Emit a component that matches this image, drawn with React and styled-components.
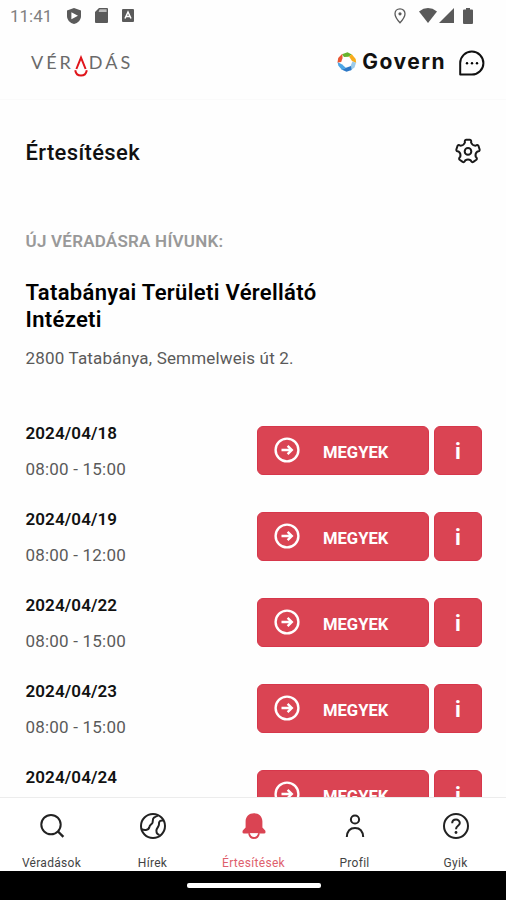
import React from "react";
import styled, { createGlobalStyle, ThemeProvider } from "styled-components";

const theme = {
  colors: {
    red: "#da4453",
    redEdge: "#d6374b",
    dark: "#111111",
    text: "#5a5a5a",
    muted: "#999999",
    status: "#5a5a5a",
    line: "#ececec",
  },
};

const days = [
  { date: "2024/04/18", hours: "08:00 - 15:00" },
  { date: "2024/04/19", hours: "08:00 - 12:00" },
  { date: "2024/04/22", hours: "08:00 - 15:00" },
  { date: "2024/04/23", hours: "08:00 - 15:00" },
  { date: "2024/04/24", hours: "08:00 - 15:00" },
];

const tabs = [
  { label: "Véradások", icon: SearchIcon },
  { label: "Hírek", icon: GlobeIcon },
  { label: "Értesítések", icon: BellIcon, active: true },
  { label: "Profil", icon: ProfileIcon },
  { label: "Gyik", icon: HelpIcon },
];

// five rounded teeth, the first one pointing up
const polar = (r, deg) => {
  const a = (deg * Math.PI) / 180;
  return `${(13 + r * Math.cos(a)).toFixed(2)} ${(13.4 + r * Math.sin(a)).toFixed(2)}`;
};
const gearPath =
  [0, 1, 2, 3, 4]
    .map((k) => {
      const mid = -90 + k * 72;
      return `${k ? "L" : "M"}${polar(9.4, mid - 19)}Q${polar(12, mid - 18)} ${polar(11.8, mid - 9)}L${polar(
        11.8,
        mid + 9
      )}Q${polar(12, mid + 18)} ${polar(9.4, mid + 19)}Q${polar(7.2, mid + 36)} ${polar(9.4, mid + 53)}`;
    })
    .join("") + "Z";

export default function App() {
  return (
    <ThemeProvider theme={theme}>
      <GlobalStyle />
      <Screen>
        <StatusBar />
        <Header />
        <Content>
          <TitleRow>
            <Title>Értesítések</Title>
            <GearIcon />
          </TitleRow>
          <SectionLabel>ÚJ VÉRADÁSRA HÍVUNK:</SectionLabel>
          <Place>Tatabányai Területi Vérellátó Intézeti</Place>
          <Address>2800 Tatabánya, Semmelweis út 2.</Address>
          <DayList>
            {days.map((day) => (
              <Day key={day.date} {...day} />
            ))}
          </DayList>
        </Content>
        <TabBar>
          {tabs.map(({ label, icon: Icon, active }) => (
            <Tab key={label} $active={active}>
              <Icon />
              <TabLabel>{label}</TabLabel>
            </Tab>
          ))}
        </TabBar>
        <SystemBar>
          <HomeHandle />
        </SystemBar>
      </Screen>
    </ThemeProvider>
  );
}

function StatusBar() {
  return (
    <StatusWrapper>
      <Clock>11:41</Clock>
      <StatusLeft>
        <svg width="14" height="16" viewBox="0 0 14 16">
          <path d="M7 0L14 2.5V8C14 12 11 15 7 16C3 15 0 12 0 8V2.5Z" fill="currentColor" />
          <path d="M4.4 4.3L11 7.8L4.4 11.3Z" fill="#fff" />
        </svg>
        <svg width="13" height="15" viewBox="0 0 13 15">
          <path d="M4 0H12Q13 0 13 1V14Q13 15 12 15H1Q0 15 0 14V4Z" fill="currentColor" />
          <path d="M4.6 1.2H11.6V4H3.6Z" fill="#bbb" />
        </svg>
        <svg width="12" height="13" viewBox="0 0 12 13">
          <rect width="12" height="13" rx="1" fill="currentColor" />
          <path d="M3 9.5L6 3L9 9.5M4 7.6H8" fill="none" stroke="#fff" strokeWidth="1.5" />
        </svg>
      </StatusLeft>
      <StatusRight>
        <PinIcon width="12" height="16" viewBox="0 0 12 16">
          <path
            d="M6 .8C3 .8 1 3 1 5.8C1 9.4 6 14.8 6 14.8S11 9.4 11 5.8C11 3 9 .8 6 .8Z"
            fill="none"
            stroke="currentColor"
            strokeWidth="1.3"
          />
          <circle cx="6" cy="5.8" r="1.6" fill="currentColor" />
        </PinIcon>
        <svg width="18" height="15" viewBox="0 0 18 15">
          <path d="M0 3.4Q9 -3.4 18 3.4L9 15Z" fill="currentColor" />
        </svg>
        <SignalIcon width="15" height="15" viewBox="0 0 15 15">
          <path d="M15 0V15H0Z" fill="currentColor" />
        </SignalIcon>
        <svg width="10" height="16" viewBox="0 0 10 16">
          <path d="M3 0H7V1.5H9Q10 1.5 10 2.5V15Q10 16 9 16H1Q0 16 0 15V2.5Q0 1.5 1 1.5H3Z" fill="currentColor" />
        </svg>
      </StatusRight>
    </StatusWrapper>
  );
}

function Header() {
  return (
    <HeaderWrapper>
      <Brand>
        <span>VÉR</span>
        <Drop width="14" height="22" viewBox="0 0 14 22">
          <path d="M2.4 14L7 2.6L11.6 14" fill="none" stroke="#e0151b" strokeWidth="2" />
          <path d="M1.2 15.2Q2.2 20.6 7 20.6T12.8 15.2" fill="none" stroke="#e0151b" strokeWidth="2" />
        </Drop>
        <span>DÁS</span>
      </Brand>
      <Partner>
        <svg width="20" height="20" viewBox="0 0 20 20">
          <path d="M5 2.2L10.5 .3L14.8 2.5L11.5 4.8L7 5Z" fill="#67b32e" />
          <path d="M14.8 2.2L18.7 7L19.2 11L15 8.9L12 4.6Z" fill="#f8ac1b" />
          <path d="M19 10.8L17.5 15.5L13.2 18.8L13.4 14.4L15.4 9.5Z" fill="#9ccbea" />
          <path d="M14.6 18L9.5 19.8L4.5 17.5L8.3 15.9L14 14Z" fill="#2d78c6" />
          <path d="M5 17.9L1.4 13.8L.5 10L5.2 12.4L9 16Z" fill="#4aa5e5" />
          <path d="M.5 10.4L1.2 6L5.3 1.7L5.6 6L4.2 10Z" fill="#e95632" />
        </svg>
        <PartnerName>Govern</PartnerName>
        <ChatIcon width="28" height="26" viewBox="0 0 28 26">
          <path
            d="M2.2 24.6V13A11.6 11.5 0 1 1 13.8 24.6Z"
            fill="none"
            stroke="#111"
            strokeWidth="2"
            strokeLinejoin="round"
          />
          <circle cx="9" cy="13.2" r="1.2" />
          <circle cx="14" cy="13.2" r="1.2" />
          <circle cx="19" cy="13.2" r="1.2" />
        </ChatIcon>
      </Partner>
    </HeaderWrapper>
  );
}

function Day({ date, hours }) {
  return (
    <DayRow>
      <div>
        <DayDate>{date}</DayDate>
        <DayHours>{hours}</DayHours>
      </div>
      <Actions>
        <GoButton>
          <GoIcon viewBox="0 0 26 26">
            <circle cx="13" cy="13" r="11.4" />
            <path d="M7.5 13H18M13.6 8.9L17.8 13L13.6 17.1" />
          </GoIcon>
          <GoText>MEGYEK</GoText>
        </GoButton>
        <InfoButton>i</InfoButton>
      </Actions>
    </DayRow>
  );
}

function GearIcon() {
  return (
    <GearSvg viewBox="0 0 26 26">
      <path d={gearPath} strokeLinejoin="round" />
      <circle cx="13" cy="13.4" r="3.3" />
    </GearSvg>
  );
}

function SearchIcon() {
  return (
    <TabSvg viewBox="0 0 28 28">
      <circle cx="13" cy="12.6" r="9.7" />
      <path d="M20 19.5L25.4 24.8" strokeWidth="2.4" />
    </TabSvg>
  );
}

function GlobeIcon() {
  return (
    <TabSvg viewBox="0 0 28 28">
      <circle cx="14" cy="14" r="12" />
      <path d="M2.4 17.2C5 18.4 9.5 18.6 10.2 15.6C10.6 13.2 11.8 12.8 13 11.6C14.6 10 12.8 7.5 15 5.6Q17 4.4 19 3.6" />
      <path d="M24.6 8.6C21.6 7.8 19.6 9.4 20 12.2C20.2 14.6 17.4 16 17.4 18.6C17.4 21.4 19 22.8 20.6 23" />
    </TabSvg>
  );
}

function BellIcon() {
  return (
    <TabSvg viewBox="0 0 28 28">
      <path
        d="M14 1.2C9 1.2 5.6 4.6 5.6 9.5V15.5L2.8 18.6Q1.8 21.6 4 21.6H24Q26.2 21.6 25.2 18.6L22.4 15.5V9.5C22.4 4.6 19 1.2 14 1.2Z"
        fill="currentColor"
        stroke="none"
      />
      <path d="M9 21.2Q10 26 14 26T19 21.2" fill="#fff" strokeWidth="1.8" />
    </TabSvg>
  );
}

function ProfileIcon() {
  return (
    <TabSvg viewBox="0 0 28 28">
      <circle cx="14" cy="7.5" r="4.1" />
      <path d="M5.8 25C6.2 18.8 9.3 16 14 16S21.8 18.8 22.2 25" />
    </TabSvg>
  );
}

function HelpIcon() {
  return (
    <TabSvg viewBox="0 0 28 28">
      <circle cx="14" cy="14" r="12" />
      <path d="M10.2 11.2C10.2 6.4 17.8 6.4 17.8 11C17.8 14 14 13.6 14 17.2" />
      <circle cx="14" cy="20.5" r="1.4" fill="currentColor" stroke="none" />
    </TabSvg>
  );
}

const GlobalStyle = createGlobalStyle`
  * {
    box-sizing: border-box;
  }
  body {
    margin: 0;
    background: #fefefe;
    font-family: Roboto, sans-serif;
  }
  h1, h2, h3, p {
    margin: 0;
  }
`;

const Screen = styled.div`
  display: flex;
  flex-direction: column;
  width: 506px;
  height: 900px;
  overflow: hidden;
  color: ${({ theme }) => theme.colors.dark};
`;

const StatusWrapper = styled.div`
  display: flex;
  flex: none;
  align-items: center;
  height: 31px;
  padding: 0 33px 0 10px;
  color: ${({ theme }) => theme.colors.status};
`;

const Clock = styled.span`
  width: 57px;
  font-size: 17px;
  color: #808080;
`;

const StatusLeft = styled.div`
  display: flex;
  align-items: center;
  gap: 14px;
`;

const StatusRight = styled.div`
  display: flex;
  align-items: center;
  margin-left: auto;
`;

const PinIcon = styled.svg`
  margin-right: 13px;
`;

const SignalIcon = styled.svg`
  margin: 0 9px 0 2px;
`;

const HeaderWrapper = styled.header`
  display: flex;
  flex: none;
  align-items: center;
  justify-content: space-between;
  height: 69px;
  padding: 0 20px 6px 31px;
  border-bottom: 1px solid #fafafa;
`;

const Brand = styled.div`
  display: flex;
  align-items: center;
  font-family: Lato, sans-serif;
  font-size: 18px;
  font-weight: 400;
  letter-spacing: 3px;
  color: #6a6a6a;
`;

const Drop = styled.svg`
  margin: 7px 1px 0 0;
`;

const Partner = styled.div`
  display: flex;
  align-items: center;
`;

const PartnerName = styled.span`
  margin-left: 5px;
  font-family: Inter, sans-serif;
  font-size: 21px;
  font-weight: 700;
  line-height: 24px;
  letter-spacing: 1.5px;
`;

const ChatIcon = styled.svg`
  margin: 1px 0 0 12px;
`;

const Content = styled.main`
  flex: 1;
  min-height: 0;
  padding: 0 24px 0 25.5px;
  overflow: hidden;
`;

const TitleRow = styled.div`
  display: flex;
  align-items: center;
  justify-content: space-between;
  height: 104px;
`;

const Title = styled.h1`
  font-size: 22px;
  font-weight: 500;
  letter-spacing: 0.35px;
`;

const GearSvg = styled.svg`
  width: 26px;
  height: 26px;
  margin: 0 1.5px 2px 0;
  fill: none;
  stroke: #1a1a1a;
  stroke-width: 2;
`;

const SectionLabel = styled.h3`
  margin-top: 26px;
  font-size: 17px;
  font-weight: 600;
  line-height: 22px;
  letter-spacing: 0.23px;
  color: ${({ theme }) => theme.colors.muted};
`;

const Place = styled.h2`
  width: 320px;
  margin-top: 27px;
  font-size: 22px;
  font-weight: 600;
  line-height: 27px;
  letter-spacing: 0.33px;
  color: #000;
`;

const Address = styled.p`
  margin-top: 14px;
  font-size: 17px;
  line-height: 22px;
  letter-spacing: 0.18px;
  color: ${({ theme }) => theme.colors.text};
`;

const DayList = styled.div`
  margin-top: 51px;
`;

const DayRow = styled.div`
  display: flex;
  justify-content: space-between;
  height: 86.1px;
`;

const DayDate = styled.h3`
  font-size: 17px;
  font-weight: 600;
  line-height: 26px;
  letter-spacing: 0.1px;
`;

const DayHours = styled.p`
  margin-top: 10px;
  font-size: 17px;
  line-height: 26px;
  letter-spacing: 0.2px;
  color: ${({ theme }) => theme.colors.text};
`;

const Actions = styled.div`
  display: flex;
  gap: 5px;
  padding-top: 6px;
`;

const GoButton = styled.button`
  display: flex;
  align-items: center;
  width: 172px;
  height: 49px;
  padding: 0 16px;
  border: 1px solid ${({ theme }) => theme.colors.redEdge};
  border-radius: 6px;
  background-color: ${({ theme }) => theme.colors.red};
  color: #fff;
  font-family: inherit;
`;

const GoIcon = styled.svg`
  width: 26px;
  height: 26px;
  margin-bottom: 1px;
  fill: none;
  stroke: #fff;
  stroke-width: 2.4;
`;

const GoText = styled.span`
  margin: 4px 0 0 23px;
  font-size: 16.6px;
  font-weight: 700;
`;

const InfoButton = styled(GoButton)`
  justify-content: center;
  width: 48px;
  padding: 2px 0 0;
  font-size: 22px;
  font-weight: 700;
`;

const TabBar = styled.nav`
  display: grid;
  flex: none;
  grid-template-columns: repeat(5, 1fr);
  height: 74px;
  padding-left: 1px;
  border-top: 1px solid ${({ theme }) => theme.colors.line};
  background-color: #fff;
`;

const Tab = styled.div`
  display: flex;
  flex-direction: column;
  align-items: center;
  padding-top: 14px;
  color: ${({ $active, theme }) => ($active ? theme.colors.red : "#222")};
`;

const TabSvg = styled.svg`
  width: 28px;
  height: 28px;
  fill: none;
  stroke: currentColor;
  stroke-width: 2;
`;

const TabLabel = styled.span`
  margin-top: 15px;
  font-size: 12px;
  line-height: 16px;
  letter-spacing: 0.3px;
  opacity: 0.85;
`;

const SystemBar = styled.footer`
  display: flex;
  flex: none;
  align-items: center;
  justify-content: center;
  height: 29px;
  background-color: #000;
`;

const HomeHandle = styled.div`
  width: 134px;
  height: 5px;
  margin-left: 1px;
  border-radius: 2px;
  background-color: #fff;
`;
